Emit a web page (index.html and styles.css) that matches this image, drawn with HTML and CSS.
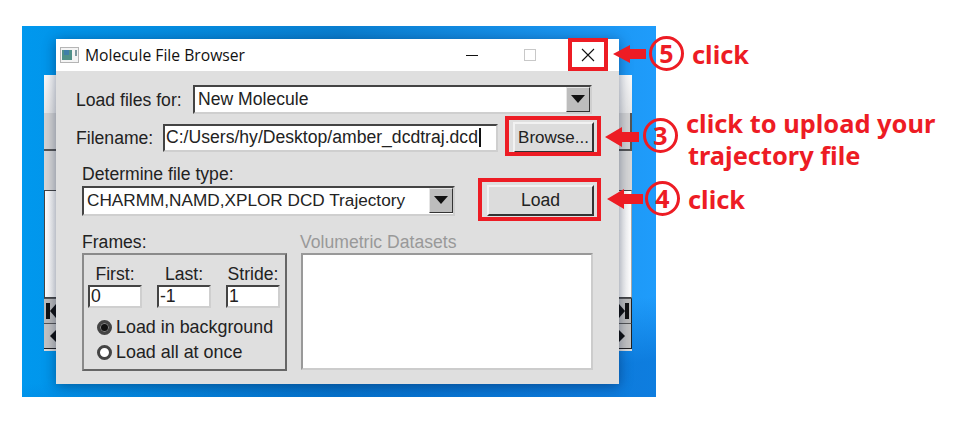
FILE: index.html
```html
<!DOCTYPE html>
<html>
<head>
<meta charset="UTF-8">
<title>Molecule File Browser</title>
<link rel="stylesheet" href="styles.css">
</head>
<body>
<div class="desktop">

    <!-- window behind the dialog -->
    <div class="back-window">
        <div class="back-top"></div>
        <div class="back-mid"></div>
        <div class="back-low"></div>
        <div class="back-list"></div>
        <div class="back-btn back-btn-dark">
            <svg width="12" height="18" viewBox="0 0 12 18"><rect x="2" y="1" width="4" height="16" fill="#111"/><polygon points="6,9 12,2 12,16" fill="#111"/></svg>
            <svg width="12" height="18" viewBox="0 0 12 18"><rect x="6" y="1" width="4" height="16" fill="#111"/><polygon points="6,9 0,2 0,16" fill="#111"/></svg>
        </div>
        <div class="back-btn">
            <svg width="12" height="16" viewBox="0 0 12 16"><polygon points="6,8 12,2 12,14" fill="#111"/></svg>
            <svg width="12" height="16" viewBox="0 0 12 16"><polygon points="6,8 0,2 0,14" fill="#111"/></svg>
        </div>
    </div>

    <div class="dialog">
        <div class="titlebar">
            <svg class="app-icon" width="19" height="16" viewBox="0 0 19 16">
                <rect x="0.5" y="0.5" width="18" height="15" fill="#f4f4f4" stroke="#b5b5b5"/>
                <rect x="2" y="3" width="10" height="10" fill="#4f9088"/>
                <rect x="4" y="3" width="5" height="5" fill="#3f7fa8"/>
                <rect x="15" y="3" width="2" height="6" fill="#7d9aa0"/>
            </svg>
            <span class="title">Molecule File Browser</span>
            <div class="win-btn"><span class="min-line"></span></div>
            <div class="win-btn"><span class="max-box"></span></div>
            <div class="win-btn">
                <svg width="14" height="14" viewBox="0 0 14 14"><path d="M1 1 L13 13 M13 1 L1 13" stroke="#111" stroke-width="1.1" fill="none"/></svg>
            </div>
        </div>

        <div class="dialog-body">
            <div class="row row-load">
                <label class="lbl lbl-for">Load files for:</label>
                <div class="combo combo-mol">
                    <span class="combo-text">New Molecule</span>
                    <span class="combo-arrow"></span>
                </div>
            </div>

            <div class="row row-file">
                <label class="lbl lbl-file">Filename:</label>
                <div class="entry entry-file"><span>C:/Users/hy/Desktop/amber_dcdtraj.dcd</span><i class="caret"></i></div>
                <div class="btn btn-browse">Browse...</div>
            </div>

            <div class="type-block">
                <label class="lbl lbl-type">Determine file type:</label>
                <div class="row row-type">
                    <div class="combo combo-type">
                        <span class="combo-text">CHARMM,NAMD,XPLOR DCD Trajectory</span>
                        <span class="combo-arrow"></span>
                    </div>
                    <div class="btn btn-load">Load</div>
                </div>
            </div>

            <div class="row row-lower">
                <div class="frames-col">
                    <label class="lbl">Frames:</label>
                    <div class="frames">
                        <div class="frame-fields">
                            <div class="field"><span>First:</span><div class="entry entry-small">0</div></div>
                            <div class="field"><span>Last:</span><div class="entry entry-small">-1</div></div>
                            <div class="field"><span>Stride:</span><div class="entry entry-small">1</div></div>
                        </div>
                        <div class="radio-row"><i class="radio radio-on"></i>Load in background</div>
                        <div class="radio-row"><i class="radio"></i>Load all at once</div>
                    </div>
                </div>
                <div class="vol-col">
                    <label class="lbl lbl-off">Volumetric Datasets</label>
                    <div class="vol-list"></div>
                </div>
            </div>
        </div>
    </div>
</div>

<!-- red annotations on top of the screenshot -->
<div class="mark mark-close"></div>
<div class="mark mark-browse"></div>
<div class="mark mark-load"></div>

<svg class="arrow arrow-5" width="33" height="20" viewBox="0 0 33 20"><polygon points="0,10 17,1 17,5 33,5 33,15 17,15 17,19" fill="#ed1c24"/></svg>
<svg class="arrow arrow-3" width="34" height="22" viewBox="0 0 34 22"><polygon points="0,11 17,1 17,6 34,6 34,16 17,16 17,21" fill="#ed1c24"/></svg>
<svg class="arrow arrow-4" width="36" height="22" viewBox="0 0 36 22"><polygon points="0,11 17,1 17,6 36,6 36,16 17,16 17,21" fill="#ed1c24"/></svg>

<div class="step step-5"><span class="num">5</span><span class="note">click</span></div>
<div class="step step-3"><span class="num">3</span><span class="note">click to upload your<br><span class="note-indent">trajectory file</span></span></div>
<div class="step step-4"><span class="num">4</span><span class="note">click</span></div>
</body>
</html>
```

FILE: styles.css
```css
html, body
{
    margin: 0;
    padding: 0;
    background: #fff;
}
body
{
    width: 954px;
    height: 422px;
    position: relative;
    overflow: hidden;
    font-family: "Liberation Sans", Arial, sans-serif;
    font-size: 17.6px;
    color: #222;
}
.desktop
{
    position: absolute;
    left: 22px;
    top: 26px;
    width: 634px;
    height: 371px;
    overflow: hidden;
    background:
        linear-gradient(172deg, transparent 0 78%, rgba(0,100,200,0.55) 92%),
        linear-gradient(90deg, #0098ee 0%, #0a7fd0 50%, #1f9cfb 100%);
}

/* back window */
.back-window
{
    position: absolute;
    left: 22px;
    top: 49px;
    width: 588px;
    height: 276px;
    display: flex;
    flex-direction: column;
    background: #dedede;
}
.back-top
{
    height: 38px;
    background: linear-gradient(#fafafa, #e8e8e8);
}
.back-mid
{
    height: 36px;
    background: #d4d4d4;
    border-bottom: 2px solid #555;
    border-right: 2px solid #555;
}
.back-low
{
    height: 39px;
    background: #d8d8d8;
}
.back-list
{
    height: 108px;
    background: linear-gradient(90deg, #fff, #e4e4e4 4%, #e4e4e4 96%, #fff);
    border: 1px solid #444;
    border-right-color: #aaa;
    box-sizing: border-box;
}
.back-btn
{
    height: 25px;
    display: flex;
    justify-content: space-between;
    align-items: center;
    background: #c4c4c4;
    border-bottom: 1px solid #222;
    border-right: 1px solid #222;
    box-sizing: border-box;
}
.back-btn-dark
{
    height: 26px;
    background: #bcbcbc;
    border-top: 1px solid #555;
    border-bottom: 1px solid #555;
}

/* dialog */
.dialog
{
    position: absolute;
    left: 34px;
    top: 13px;
    width: 563px;
    height: 345px;
    display: flex;
    flex-direction: column;
    box-shadow: 0 2px 12px rgba(0,20,60,0.45);
}
.titlebar
{
    height: 32px;
    flex: none;
    display: flex;
    align-items: center;
    background: #fff;
    padding-left: 4px;
    box-sizing: border-box;
}
.app-icon
{
    flex: none;
    margin-right: 6px;
}
.title
{
    flex: 1;
    font-family: "Open Sans", sans-serif;
    font-size: 15.7px;
    color: #111;
}
.win-btn
{
    width: 58px;
    height: 32px;
    flex: none;
    display: flex;
    align-items: center;
    justify-content: center;
}
.win-btn:last-child
{
    margin-right: 2px;
}
.min-line
{
    width: 12px;
    height: 1px;
    background: #111;
}
.max-box
{
    width: 10px;
    height: 10px;
    border: 1px solid #c8c8c8;
}
.dialog-body
{
    flex: 1;
    background: #dfdfdf;
    padding: 14px 24px 12px 20px;
}
.row
{
    display: flex;
    align-items: center;
}
.lbl
{
    display: block;
    color: #222;
    line-height: 18px;
}
.lbl-off
{
    color: #999;
    margin-left: -1px;
}
.lbl-for
{
    width: 117px;
}
.lbl-file
{
    width: 87px;
}
.row-file
{
    margin-top: 8px;
}

/* sunken fields */
.combo, .entry
{
    flex: none;
    box-sizing: border-box;
    background: #fff;
    border: 2px solid;
    border-color: #444 #cfcfcf #cfcfcf #444;
}
.combo
{
    display: flex;
    align-items: center;
    justify-content: space-between;
}
.combo-text
{
    padding-left: 3px;
    white-space: nowrap;
}
.combo-mol
{
    width: 399px;
    height: 29px;
}
.combo-type
{
    width: 373px;
    height: 30px;
    font-size: 17.2px;
}
.combo-arrow
{
    width: 24px;
    height: 25px;
    position: relative;
    box-sizing: border-box;
    background: #bdbdbd;
    border: 1px solid;
    border-color: #e6e6e6 #333 #333 #e6e6e6;
}
.combo-arrow::after
{
    content: "";
    position: absolute;
    left: 4px;
    top: 7px;
    border-left: 7px solid transparent;
    border-right: 7px solid transparent;
    border-top: 8px solid #111;
}
.entry-file
{
    width: 335px;
    height: 28px;
    display: flex;
    align-items: center;
    padding-left: 1px;
    white-space: nowrap;
}
.caret
{
    width: 2px;
    height: 19px;
    background: #111;
    margin-left: 1px;
}
.btn
{
    flex: none;
    box-sizing: border-box;
    background: #dcdcdc;
    border: 2px solid;
    border-color: #f2f2f2 #333 #333 #f2f2f2;
    display: flex;
    align-items: center;
    justify-content: center;
}
.btn-browse
{
    width: 81px;
    height: 31px;
    margin-left: 15px;
    font-size: 17px;
}
.type-block
{
    margin-top: 12px;
    margin-left: 6px;
}
.row-type
{
    margin-top: 2px;
}
.btn-load
{
    width: 107px;
    height: 31px;
    margin-left: 32px;
}
.row-lower
{
    align-items: flex-start;
    margin-top: 17px;
    margin-left: 6px;
}
.frames-col
{
    width: 205px;
}
.frames
{
    box-sizing: border-box;
    height: 118px;
    margin-top: 2px;
    border: 2px solid;
    border-color: #8a8a8a #666 #666 #8a8a8a;
    padding: 9px 5px 0 4px;
}
.frame-fields
{
    display: flex;
    justify-content: space-between;
    margin-bottom: 7px;
}
.field
{
    display: flex;
    flex-direction: column;
    align-items: center;
    line-height: 21px;
}
.entry-small
{
    width: 54px;
    height: 23px;
    line-height: 19px;
    padding-left: 1px;
}
.radio-row
{
    display: flex;
    align-items: center;
    height: 25px;
    padding-left: 9px;
    color: #222;
    font-size: 17.9px;
}
.radio
{
    box-sizing: border-box;
    width: 15px;
    height: 15px;
    margin-right: 4px;
    border-radius: 50%;
    background: #fff;
    border: 3px solid #444;
}
.radio-on
{
    background: #111;
    box-shadow: inset 0 0 0 1px #888;
}
.vol-col
{
    margin-left: 14px;
}
.vol-list
{
    box-sizing: border-box;
    width: 292px;
    height: 117px;
    margin-top: 2px;
    background: #fff;
    border: 2px solid;
    border-color: #999 #ccc #ccc #999;
}

/* annotations */
.mark
{
    position: absolute;
    box-sizing: border-box;
    border: 4px solid #ed1c24;
}
.mark-close
{
    left: 568px;
    top: 38px;
    width: 40px;
    height: 33px;
}
.mark-browse
{
    left: 505px;
    top: 116px;
    width: 96px;
    height: 40px;
}
.mark-load
{
    left: 478px;
    top: 178px;
    width: 123px;
    height: 43px;
}
.arrow
{
    position: absolute;
}
.arrow-5
{
    left: 613px;
    top: 44px;
}
.arrow-3
{
    left: 605px;
    top: 126px;
}
.arrow-4
{
    left: 607px;
    top: 188px;
}
.step
{
    position: absolute;
    display: flex;
    align-items: center;
    color: #ed1c24;
    font-family: "Noto Sans", sans-serif;
    font-weight: bold;
}
.num
{
    box-sizing: border-box;
    width: 35px;
    height: 35px;
    flex: none;
    border: 3px solid #ed1c24;
    border-radius: 50%;
    display: flex;
    align-items: center;
    justify-content: center;
    font-size: 25px;
    line-height: 1;
}
.note
{
    font-size: 25.4px;
    line-height: 32px;
    white-space: nowrap;
}
.note-indent
{
    margin-left: 2px;
}
.step-5
{
    left: 649px;
    top: 36px;
}
.step-5 .note
{
    margin-left: 8px;
}
.step-3
{
    left: 643px;
    top: 107px;
    align-items: flex-start;
}
.step-3 .num
{
    margin-top: 11px;
}
.step-3 .note
{
    margin-left: 8px;
}
.step-4
{
    left: 645px;
    top: 181px;
}
.step-4 .note
{
    margin-left: 8px;
}
```
